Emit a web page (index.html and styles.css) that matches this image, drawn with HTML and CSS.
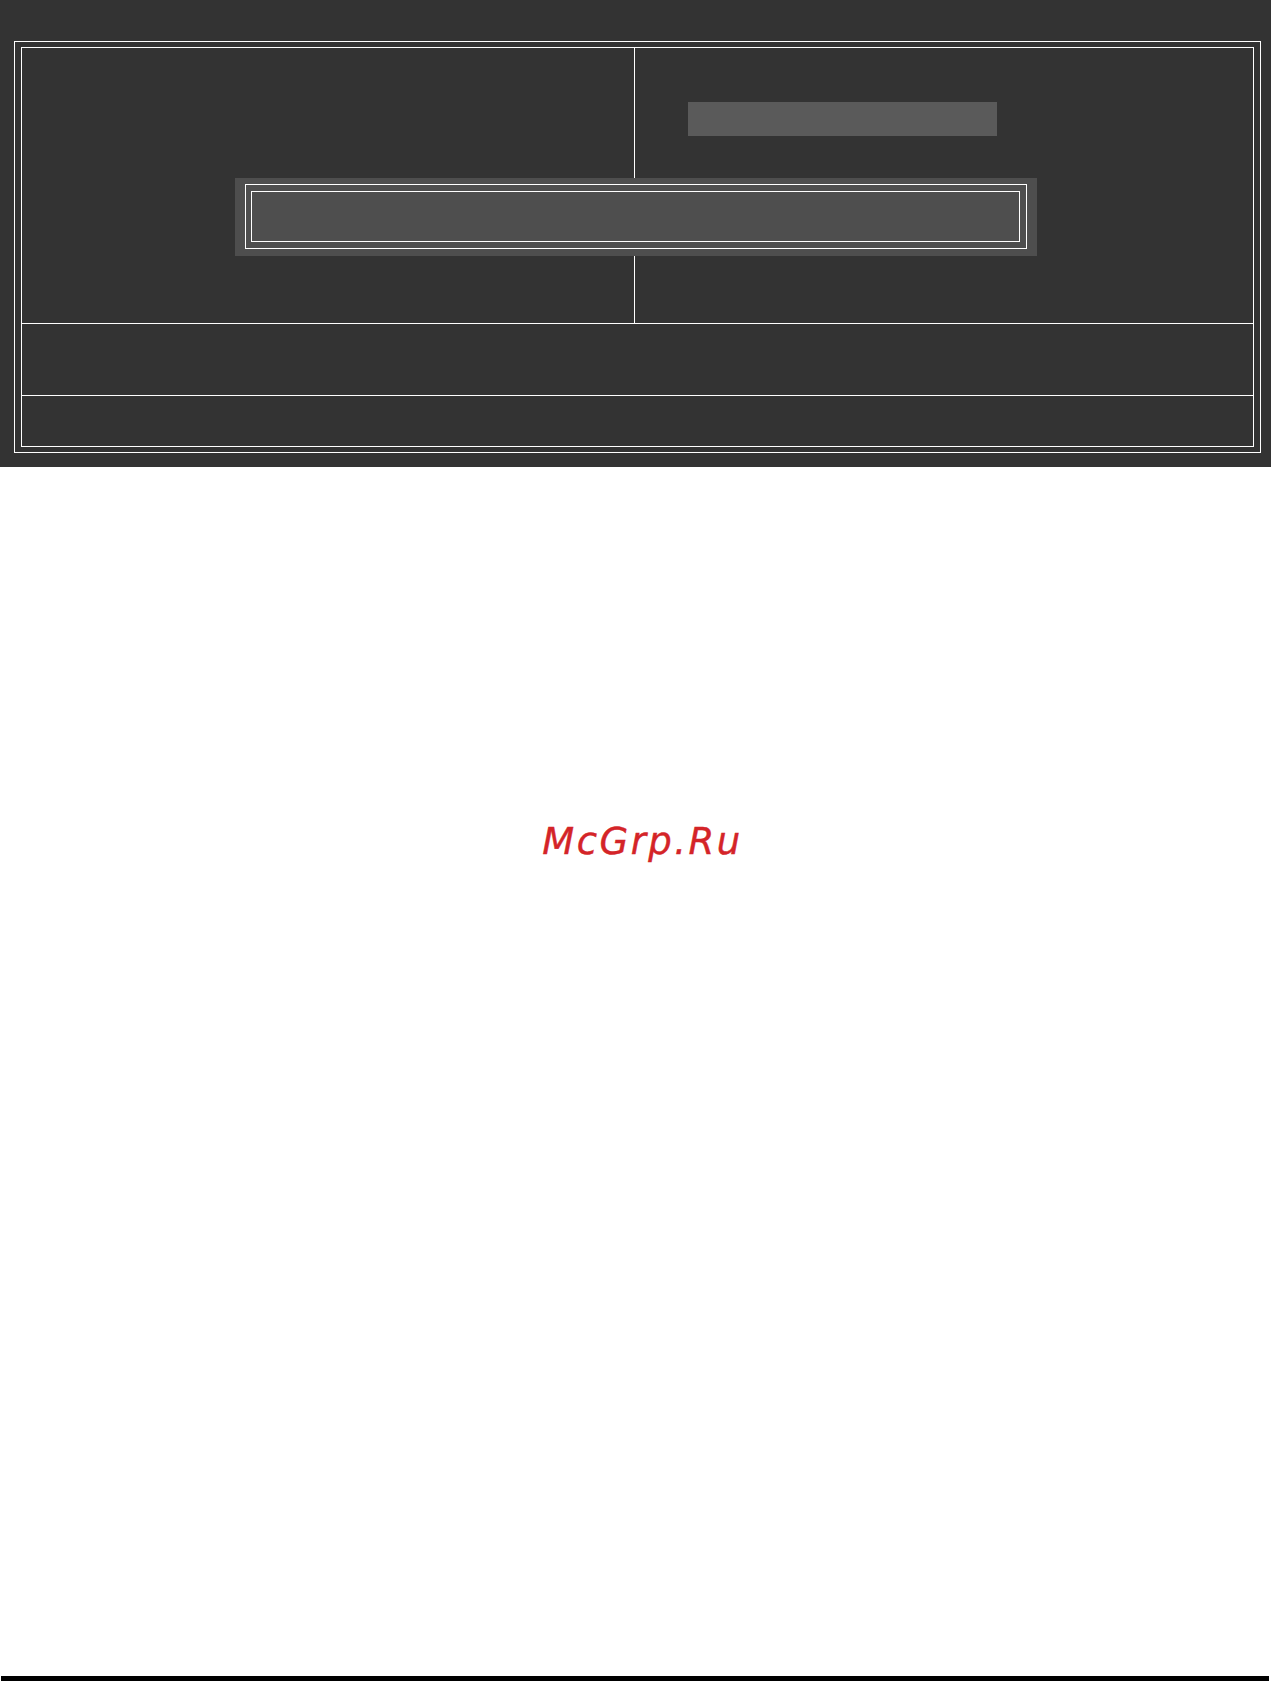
FILE: index.html
```html
<!DOCTYPE html>
<html lang="ru">
<head>
<meta charset="utf-8">
<title>BIOS screen</title>
<link rel="stylesheet" href="styles.css">
</head>
<body>
<div class="screen">
  <div class="outer">
    <div class="inner">
      <div class="top">
        <div class="col col-left"></div>
        <div class="col col-right">
          <div class="field"></div>
        </div>
      </div>
      <div class="middle"></div>
      <div class="bottom"></div>
      <div class="dialog">
        <div class="dialog-frame">
          <div class="dialog-body"></div>
        </div>
      </div>
    </div>
  </div>
</div>
<div class="watermark">McGrp.Ru</div>
<div class="rule"></div>
</body>
</html>
```

FILE: styles.css
```css
html, body {
  margin: 0;
  padding: 0;
  background: #ffffff;
}

body {
  width: 1271px;
  height: 1681px;
  overflow: hidden;
  font-family: "DejaVu Sans", "Liberation Sans", sans-serif;
}

.screen {
  box-sizing: border-box;
  width: 1271px;
  height: 467px;
  background: #333333;
  padding: 41px 0 0 14px;
}

.outer {
  box-sizing: border-box;
  width: 1247px;
  height: 412px;
  border: 1px solid #ffffff;
  padding: 5px 6px;
}

.inner {
  position: relative;
  box-sizing: border-box;
  width: 1233px;
  height: 400px;
  border: 1px solid #ffffff;
  display: flex;
  flex-direction: column;
}

.top {
  height: 275px;
  border-bottom: 1px solid #ffffff;
  display: grid;
  grid-template-columns: 613px 617px;
  column-gap: 0;
}

.col-left {
  border-right: 1px solid #ffffff;
}

.col-right {
  padding: 54px 0 0 53px;
}

.field {
  width: 309px;
  height: 34px;
  background: #5a5a5a;
}

.middle {
  height: 71px;
  border-bottom: 1px solid #ffffff;
}

.bottom {
  height: 50px;
}

.dialog {
  position: absolute;
  left: 213px;
  top: 130px;
  box-sizing: border-box;
  width: 802px;
  height: 78px;
  background: #4e4e4e;
  padding: 6px 10px 0 10px;
}

.dialog-frame {
  box-sizing: border-box;
  width: 782px;
  height: 65px;
  border: 1px solid #ffffff;
  padding: 6px 6px 6px 5px;
}

.dialog-body {
  box-sizing: border-box;
  width: 769px;
  height: 51px;
  border: 1px solid #ffffff;
  background: #4e4e4e;
}

.watermark {
  margin-top: 357px;
  height: 36px;
  line-height: 36px;
  font-size: 37px;
  font-style: oblique;
  letter-spacing: 2.5px;
  color: #d42428;
  text-align: center;
  padding-left: 14px;
  -webkit-text-stroke: 0.4px #d42428;
}

.rule {
  margin: 816px 0 0 1px;
  width: 1268px;
  height: 5px;
  background: #000000;
}
```
